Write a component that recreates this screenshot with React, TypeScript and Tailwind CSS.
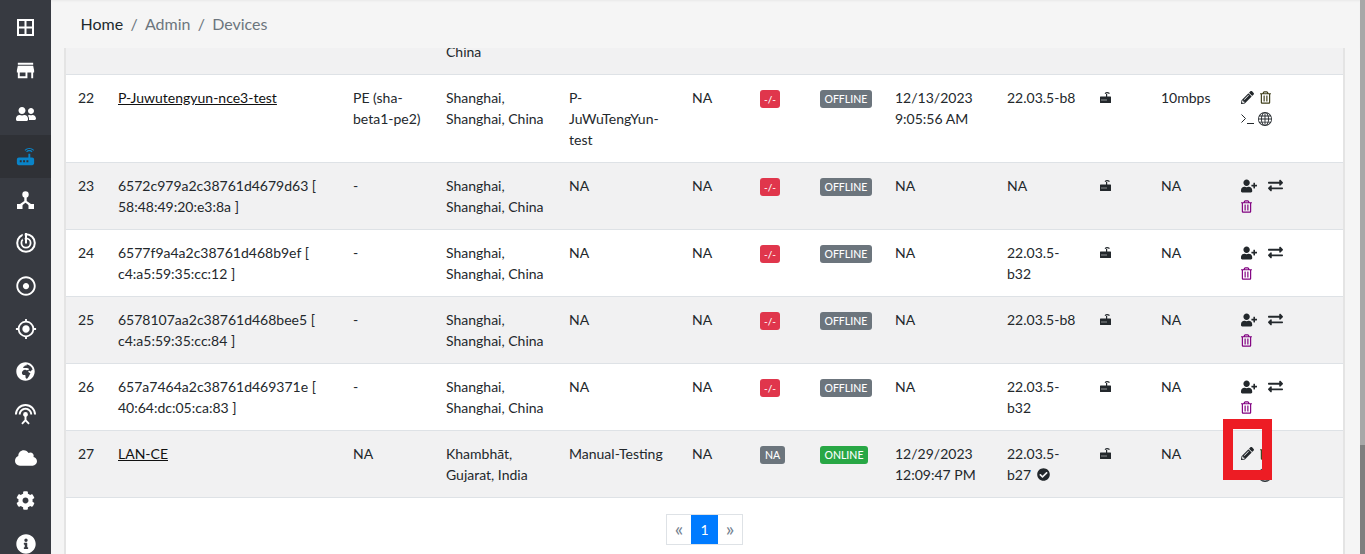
import React from "react";
import { FaPencilAlt, FaRegTrashAlt, FaUserPlus, FaExchangeAlt, FaCheckCircle, FaCloud, FaCog, FaInfoCircle, FaRegDotCircle, FaGlobeAfrica, FaUserFriends } from "react-icons/fa";
import { MdStore, MdRouter, MdGpsFixed, MdSettingsInputAntenna } from "react-icons/md";
import { BsGlobe } from "react-icons/bs";

function GridIcon() {
  return (
    <svg width="17" height="17" viewBox="0 0 17 17" fill="none">
      <rect x="1" y="1" width="15" height="15" stroke="white" strokeWidth="2" />
      <path d="M8.5 1v15M1 8.5h15" stroke="white" strokeWidth="2" />
    </svg>
  );
}
function HubIcon() {
  return (
    <svg width="17" height="18" viewBox="0 0 17 18" fill="white">
      <circle cx="8.5" cy="3.5" r="3.2" />
      <path d="M7.3 6h2.4v4l5 3.6-1.3 1.8-4.9-3.6-4.9 3.6-1.3-1.8 5-3.6z" />
      <rect x="0" y="13" width="5.5" height="5" />
      <rect x="11.5" y="13" width="5.5" height="5" />
    </svg>
  );
}
function RadarIcon() {
  return (
    <svg width="20" height="20" viewBox="0 0 20 20" fill="none">
      <circle cx="10" cy="10" r="8.8" stroke="white" strokeWidth="2" />
      <circle cx="10" cy="10" r="4.6" stroke="white" strokeWidth="1.8" />
      <path d="M7.7 0v7" stroke="#373a41" strokeWidth="2" />
      <path d="M10 0v10.5" stroke="white" strokeWidth="2" />
    </svg>
  );
}
function SmallRouter({ hole }: { hole: string }) {
  return (
    <svg width="11" height="11" viewBox="0 0 11 11" fill="#23282c">
      <path d="M5 1.600Q7-.2 9.500 1.600" fill="none" stroke="#23282c" strokeWidth="1.200" />
      <rect x="6" y="2" width="1.200" height="3" />
      <rect x="0" y="4.500" width="11" height="6.500" rx="0.500" />
      <rect x="1.500" y="7.500" width="1" height="1" fill={hole} />
      <rect x="3.500" y="7.500" width="1" height="1" fill={hole} />
      <rect x="5.500" y="7.500" width="1" height="1" fill={hole} />
    </svg>
  );
}
function TerminalIcon() {
  return (
    <svg width="13" height="10" viewBox="0 0 13 10" fill="none" stroke="#23282c" strokeWidth="1">
      <path d="M.5.5l4 4-4 4" />
      <path d="M6 9.500h7" />
    </svg>
  );
}

type Row = {
  n: number; name: string; link?: boolean; model: string; loc: string[]; org: string[]; na: string;
  badge: "red" | "na"; status: "OFFLINE" | "ONLINE"; date: string[]; fw: string[]; check?: boolean; speed: string; kind: "full" | "unclaimed"; bg: string;
};
const sh = ["Shanghai,", "Shanghai, China"];
const rows: Row[] = [
  { n: 22, name: "P-Juwutengyun-nce3-test", link: true, model: "PE (sha-beta1-pe2)", loc: sh, org: ["P-", "JuWuTengYun-", "test"], na: "NA", badge: "red", status: "OFFLINE", date: ["12/13/2023", "9:05:56 AM"], fw: ["22.03.5-b8"], speed: "10mbps", kind: "full", bg: "bg-white" },
  { n: 23, name: "6572c979a2c38761d4679d63 [ 58:48:49:20:e3:8a ]", model: "-", loc: sh, org: ["NA"], na: "NA", badge: "red", status: "OFFLINE", date: ["NA"], fw: ["NA"], speed: "NA", kind: "unclaimed", bg: "bg-[#f1f1f2]" },
  { n: 24, name: "6577f9a4a2c38761d468b9ef [ c4:a5:59:35:cc:12 ]", model: "-", loc: sh, org: ["NA"], na: "NA", badge: "red", status: "OFFLINE", date: ["NA"], fw: ["22.03.5-", "b32"], speed: "NA", kind: "unclaimed", bg: "bg-white" },
  { n: 25, name: "6578107aa2c38761d468bee5 [ c4:a5:59:35:cc:84 ]", model: "-", loc: sh, org: ["NA"], na: "NA", badge: "red", status: "OFFLINE", date: ["NA"], fw: ["22.03.5-b8"], speed: "NA", kind: "unclaimed", bg: "bg-[#f1f1f2]" },
  { n: 26, name: "657a7464a2c38761d469371e [ 40:64:dc:05:ca:83 ]", model: "-", loc: sh, org: ["NA"], na: "NA", badge: "red", status: "OFFLINE", date: ["NA"], fw: ["22.03.5-", "b32"], speed: "NA", kind: "unclaimed", bg: "bg-white" },
  { n: 27, name: "LAN-CE", link: true, model: "NA", loc: ["Khambhāt,", "Gujarat, India"], org: ["Manual-Testing"], na: "NA", badge: "na", status: "ONLINE", date: ["12/29/2023", "12:09:47 PM"], fw: ["22.03.5-", "b27"], check: true, speed: "NA", kind: "full", bg: "bg-[#f1f1f2]" },
];

const widths = [40, 235, 93, 123, 123, 68, 60, 75, 112, 93, 61, 80, 114];
const td = "px-3 pt-3 pb-3 align-top border-b border-[#dee2e6]";

function Lines({ l }: { l: string[] }) {
  return <>{l.map((t, i) => <div key={i}>{t}</div>)}</>;
}

function Actions({ r }: { r: Row }) {
  if (r.kind === "full") {
    return (
      <div>
        <div className="flex h-[21px] items-center gap-[6px] text-[#23282c]">
          <FaPencilAlt className="h-[13px] w-[13px]" />
          <FaRegTrashAlt className="h-[13px] w-[11px] text-[#3f3f1a]" />
        </div>
        <div className="flex h-[21px] items-center gap-[4px] text-[#23282c]">
          <TerminalIcon />
          <BsGlobe className="h-[14px] w-[14px]" />
        </div>
      </div>
    );
  }
  return (
    <div>
      <div className="flex h-[21px] items-center gap-[11px] text-[#23282c]">
        <FaUserPlus size={16} />
        <FaExchangeAlt size={15} />
      </div>
      <div className="flex h-[21px] items-center">
        <FaRegTrashAlt className="h-[13px] w-[11px] text-[#800080]" />
      </div>
    </div>
  );
}

export default function App() {
  const side = [
    <GridIcon />, <MdStore size={23} color="white" />, <FaUserFriends size={20} color="white" />,
    <MdRouter size={23} color="#0a84c8" />, <HubIcon />, <RadarIcon />,
    <FaRegDotCircle size={20} color="white" />, <MdGpsFixed size={22} color="white" />, <FaGlobeAfrica size={19} color="white" />,
    <MdSettingsInputAntenna size={23} color="white" />, <FaCloud size={22} color="white" />, <FaCog size={19} color="white" />, <FaInfoCircle size={20} color="white" />,
  ];
  return (
    <div className="flex h-[554px] w-[1365px] overflow-hidden bg-[#f5f5f5] font-['Lato',sans-serif] text-[14px] leading-[21px] text-[#23282c]">
      <aside className="flex w-[51px] shrink-0 flex-col bg-[#373a41] pt-[6px]">
        {side.map((ic, i) => (
          <div key={i} className={`flex h-[43px] shrink-0 items-center justify-center ${i === 3 ? "bg-[#2f3136]" : ""}`}>{ic}</div>
        ))}
      </aside>
      <main className="relative flex min-w-0 flex-1">
        <div className="flex min-w-0 flex-1 flex-col">
          <div className="flex h-[48px] shrink-0 items-center gap-[7.25px] bg-[#f5f5f5] pb-[2px] pl-[29.5px] text-[16px] text-[#6c757d] shadow-[inset_0_2px_2px_-1px_#e8e8e8]">
            <span className="text-[#20292e]">Home</span><span>/</span><span>Admin</span><span>/</span><span>Devices</span>
          </div>
          <div className="flex min-h-0 flex-1 flex-col justify-end overflow-hidden pl-[13px] pr-[15px]">
            <div className="border-x-2 border-[#e4e4e4] bg-white">
              <table className="w-full table-fixed border-collapse">
                <colgroup>{widths.map((w, i) => <col key={i} style={{ width: w }} />)}</colgroup>
                <tbody>
                  <tr className="bg-[#f1f1f2]">
                    <td className={td} /><td className={td} /><td className={td} />
                    <td className={td}><div>Shanghai,</div><div>Shanghai,</div><div>China</div></td>
                    <td className={td} colSpan={9} />
                  </tr>
                  {rows.map((r) => (
                    <tr key={r.n} className={r.bg}>
                      <td className={td}>{r.n}</td>
                      <td className={td}>{r.link ? <a className="text-[#111] underline">{r.name}</a> : r.name}</td>
                      <td className={td}>{r.model}</td>
                      <td className={td}><Lines l={r.loc} /></td>
                      <td className={td}><Lines l={r.org} /></td>
                      <td className={td}>{r.na}</td>
                      <td className={td}>
                        {r.badge === "red" ? (
                          <span className="inline-block h-[18px] w-[20px] rounded-[3px] bg-[#e0364c] text-center text-[10px] font-medium leading-[18px] text-white">-/-</span>
                        ) : (
                          <span className="inline-block h-[18px] w-[25px] rounded-[3px] bg-[#6c757d] text-center text-[10.5px] font-medium leading-[18px] text-white">NA</span>
                        )}
                      </td>
                      <td className={td}>
                        <span className={`inline-block h-[18px] rounded-[3px] px-[4.5px] text-center text-[10.5px] font-medium leading-[18px] text-white ${r.status === "ONLINE" ? "bg-[#28a745]" : "bg-[#6c757d]"}`}>{r.status}</span>
                      </td>
                      <td className={td}><Lines l={r.date} /></td>
                      <td className={td}>
                        {r.fw.length > 1 ? <div>{r.fw[0]}</div> : r.fw[0]}
                        {r.fw.length > 1 && <div className="flex items-center gap-[6px]">{r.fw[1]}{r.check && <FaCheckCircle size={13} />}</div>}
                      </td>
                      <td className={td}><div className="flex h-[21px] items-center"><SmallRouter hole={r.bg === "bg-white" ? "#ffffff" : "#f1f1f2"} /></div></td>
                      <td className={td}>{r.speed}</td>
                      <td className={td}><Actions r={r} /></td>
                    </tr>
                  ))}
                </tbody>
              </table>
              <div className="flex h-[56px] items-start justify-center pt-[16px]">
                <div className="flex h-[31px] border border-[#dee2e6] text-[#73818f]">
                  <span className="flex w-[24px] items-center justify-center pb-[3px] text-[20px] leading-none">«</span>
                  <span className="flex w-[27px] items-center justify-center bg-[#007bff] text-white">1</span>
                  <span className="flex w-[24px] items-center justify-center pb-[3px] text-[20px] leading-none">»</span>
                </div>
              </div>
            </div>
          </div>
        </div>
        <div className="flex h-full w-[5px] shrink-0 flex-col justify-end bg-[#a8a8a8]">
          <div className="h-[109px] bg-[#7f7f7f]" />
        </div>
        <div className="absolute left-[1172px] top-[419px] h-[61px] w-[49px] border-[10px] border-[#ed1c24]" />
      </main>
    </div>
  );
}
